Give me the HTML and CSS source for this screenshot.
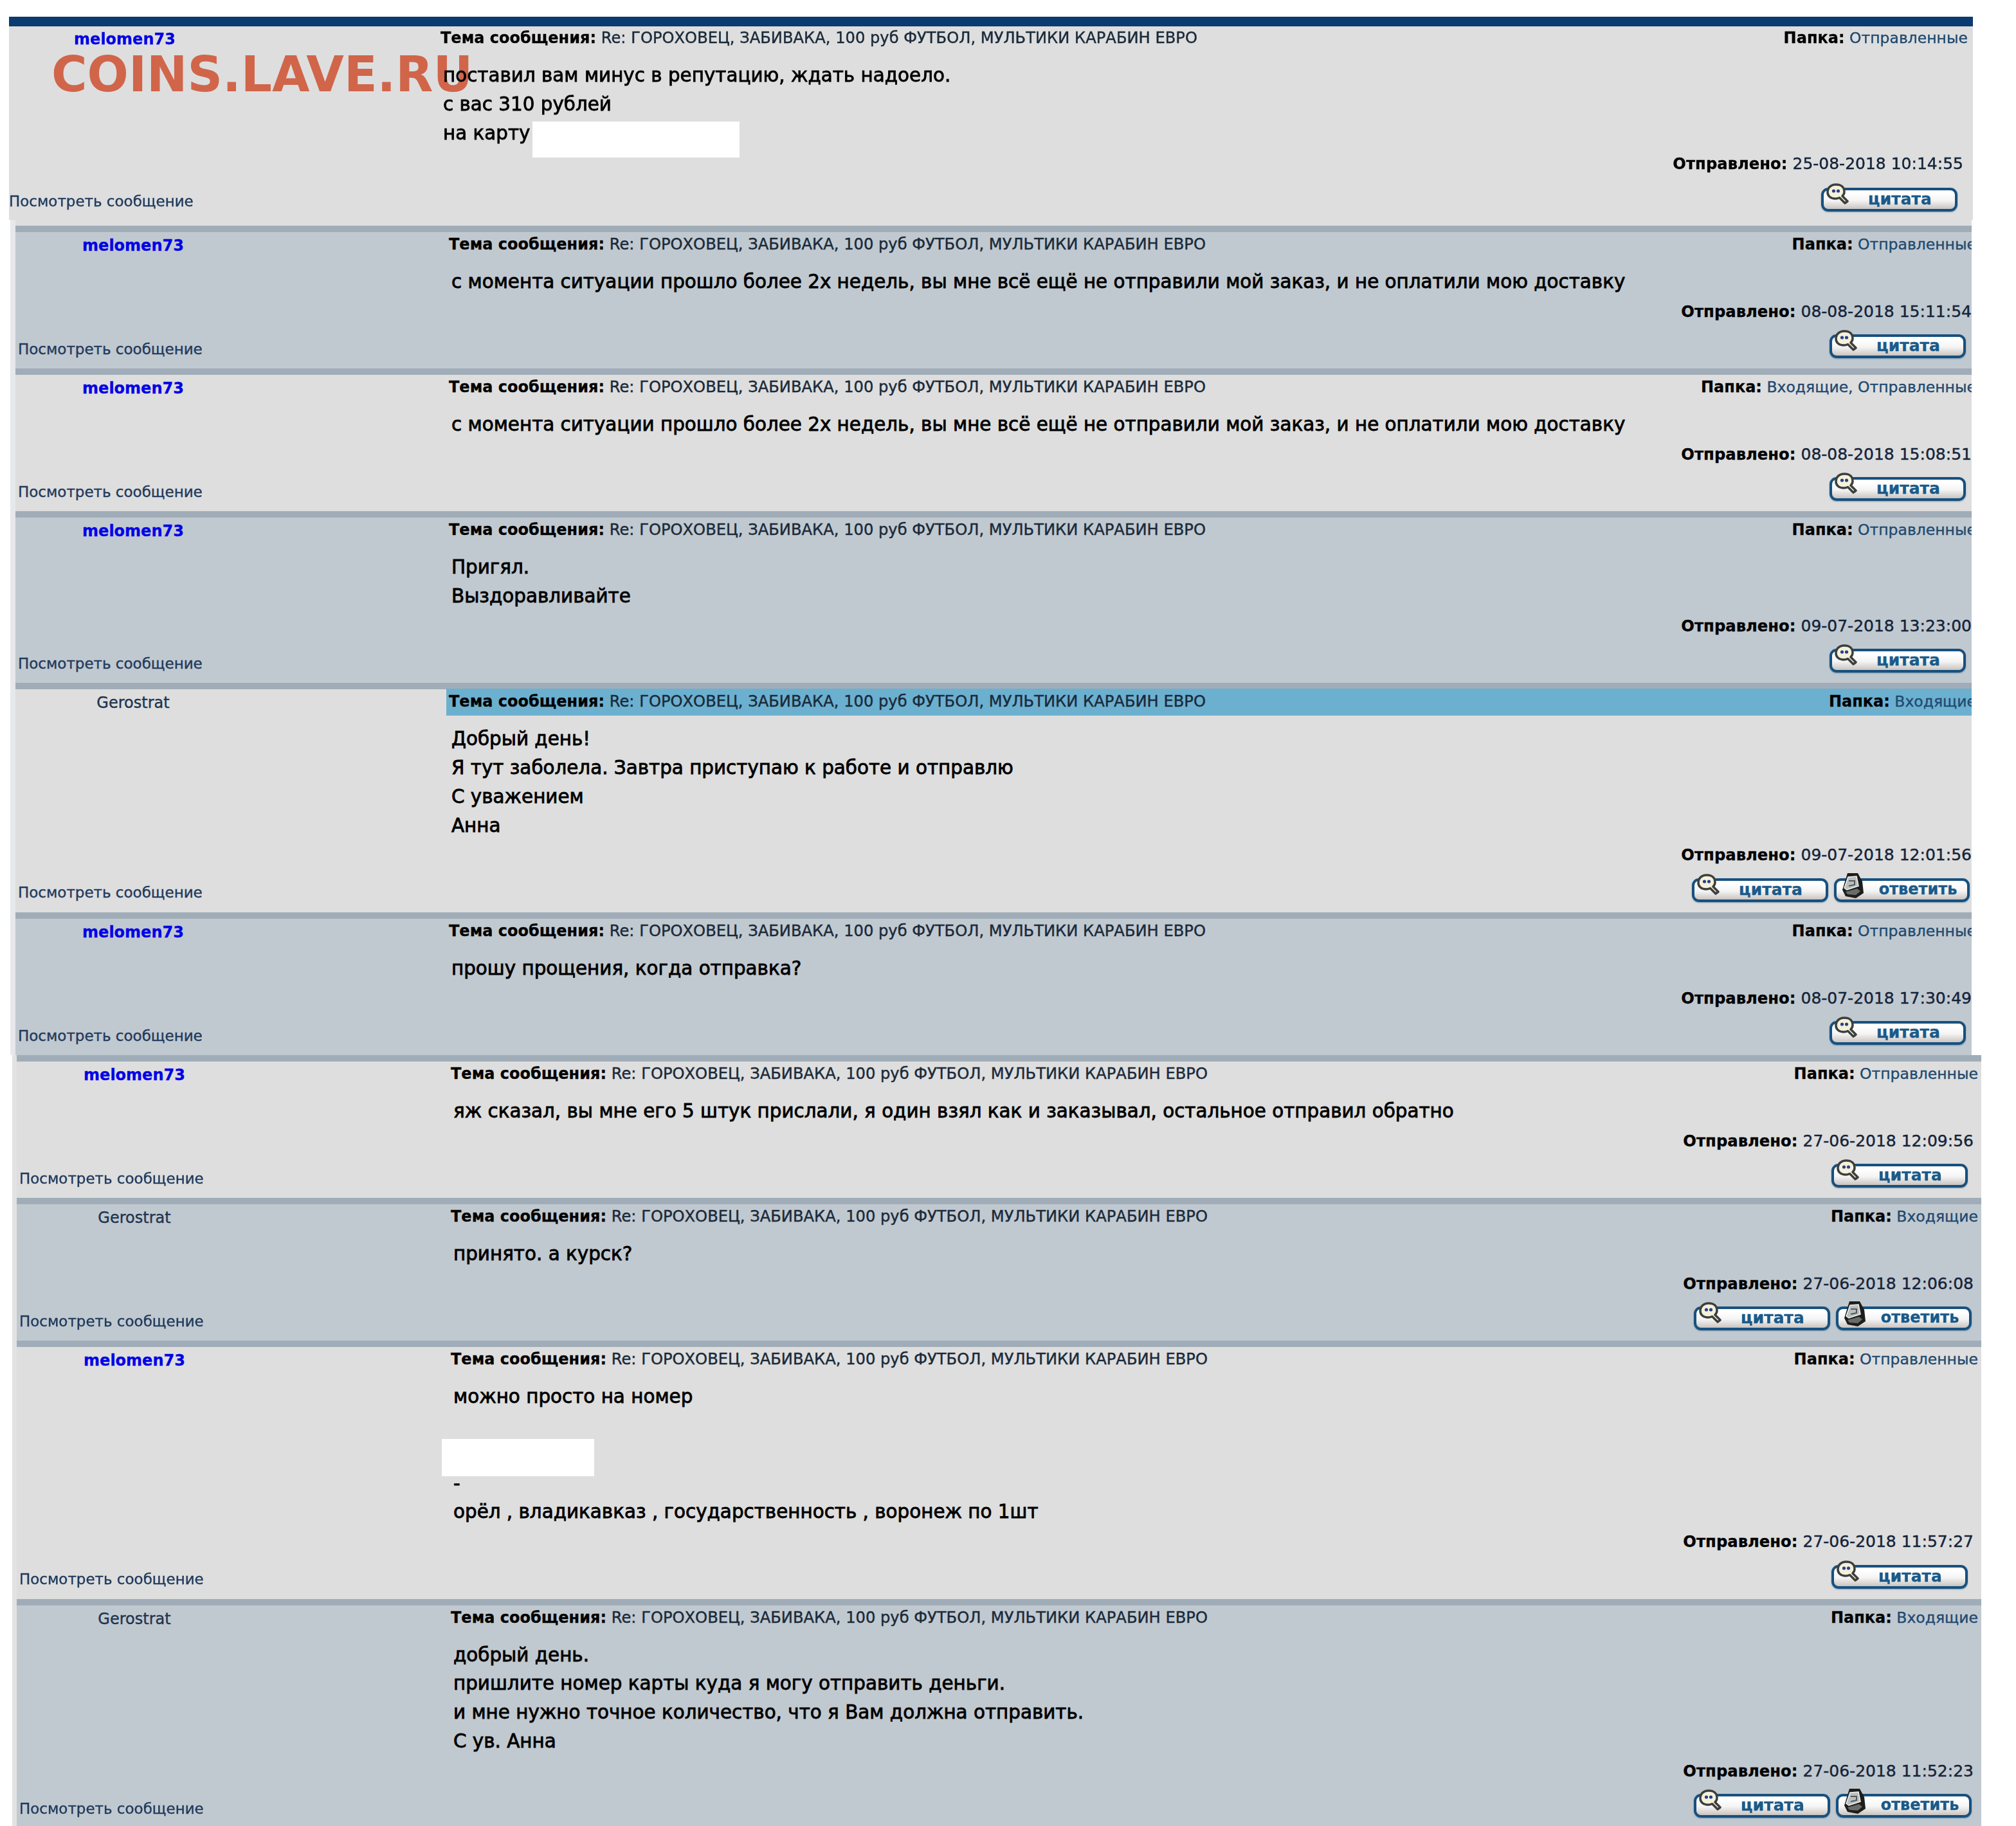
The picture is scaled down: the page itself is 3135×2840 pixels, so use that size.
FILE: index.html
```html
<!DOCTYPE html>
<html lang="ru">
<head>
<meta charset="utf-8">
<title>Личные сообщения</title>
<link rel="stylesheet" href="styles.css">
</head>
<body>
<svg class="defs" width="0" height="0" aria-hidden="true">
  <symbol id="i-quote" viewBox="0 0 35 34">
    <path d="M15 2C7 2 2 7 2 14c0 6 5 10 12 10 2.500 0 4.500-.5 6.500-1.500l8.500 8.500 4-3-8-8c2-2 3-4 3-6.500C28 6 23 2 15 2Z" fill="#f4f1dc" stroke="#3d3f3c" stroke-width="3.500" stroke-linejoin="round"/>
    <circle cx="11.500" cy="12" r="2.600" fill="#2b3f86"/><circle cx="18.500" cy="12" r="2.600" fill="#2b3f86"/>
  </symbol>
  <symbol id="i-reply" viewBox="0 0 38 43">
    <path d="M11 2 27 2 34 15 36 33 24 41 8 38 3 28Z" fill="#1d1d1b"/>
    <path d="M12 8 25 7 28 22 10 28 6 25Z" fill="#b9bfc0" stroke="#f2f2ee" stroke-width="1.500"/>
    <path d="M13 14h9v6l-9 2" fill="none" stroke="#55595a" stroke-width="2"/>
    <path d="M8 31 26 26 31 30 24 36 11 35Z" fill="#6a6c6a"/>
  </symbol>
</svg>
<main class="page">
  <section class="group group-a">
    <div class="topbar"></div>
    <div class="watermark">COINS.LAVE.RU</div>
    <article class="row grey no-stripe">
      <div class="main">
        <div class="author author-first"><a class="name">melomen73</a></div>
        <div class="content">
          <div class="subject"><span><b>Тема сообщения:</b> Re: ГОРОХОВЕЦ, ЗАБИВАКА, 100 руб ФУТБОЛ, МУЛЬТИКИ КАРАБИН ЕВРО</span><span class="folder"><b>Папка:</b> <a>Отправленные</a></span></div>
          <div class="text">
            <div class="line">поставил вам минус в репутацию, ждать надоело.</div>
            <div class="line">с вас 310 рублей</div>
            <div class="line hold">на карту<span class="redact redact-card"></span></div>
          </div>
          <div class="sent"><b>Отправлено:</b> 25-08-2018 10:14:55</div>
        </div>
      </div>
      <div class="foot"><a class="view">Посмотреть сообщение</a><div class="actions"><a class="btn btn-quote"><svg class="ico ico-quote"><use href="#i-quote"/></svg>цитата</a></div></div>
    </article>
  </section>

  <section class="group group-b">
    <div class="gap"></div>
    <article class="row blue">
      <div class="main">
        <div class="author"><a class="name">melomen73</a></div>
        <div class="content">
          <div class="subject"><span><b>Тема сообщения:</b> Re: ГОРОХОВЕЦ, ЗАБИВАКА, 100 руб ФУТБОЛ, МУЛЬТИКИ КАРАБИН ЕВРО</span><span class="folder"><b>Папка:</b> <a>Отправленные</a></span></div>
          <div class="text"><div class="line">с момента ситуации прошло более 2х недель, вы мне всё ещё не отправили мой заказ, и не оплатили мою доставку</div></div>
          <div class="sent"><b>Отправлено:</b> 08-08-2018 15:11:54</div>
        </div>
      </div>
      <div class="foot"><a class="view">Посмотреть сообщение</a><div class="actions"><a class="btn btn-quote"><svg class="ico ico-quote"><use href="#i-quote"/></svg>цитата</a></div></div>
    </article>
    <article class="row grey">
      <div class="main">
        <div class="author"><a class="name">melomen73</a></div>
        <div class="content">
          <div class="subject"><span><b>Тема сообщения:</b> Re: ГОРОХОВЕЦ, ЗАБИВАКА, 100 руб ФУТБОЛ, МУЛЬТИКИ КАРАБИН ЕВРО</span><span class="folder"><b>Папка:</b> <a>Входящие, Отправленные</a></span></div>
          <div class="text"><div class="line">с момента ситуации прошло более 2х недель, вы мне всё ещё не отправили мой заказ, и не оплатили мою доставку</div></div>
          <div class="sent"><b>Отправлено:</b> 08-08-2018 15:08:51</div>
        </div>
      </div>
      <div class="foot"><a class="view">Посмотреть сообщение</a><div class="actions"><a class="btn btn-quote"><svg class="ico ico-quote"><use href="#i-quote"/></svg>цитата</a></div></div>
    </article>
    <article class="row blue">
      <div class="main">
        <div class="author"><a class="name">melomen73</a></div>
        <div class="content">
          <div class="subject"><span><b>Тема сообщения:</b> Re: ГОРОХОВЕЦ, ЗАБИВАКА, 100 руб ФУТБОЛ, МУЛЬТИКИ КАРАБИН ЕВРО</span><span class="folder"><b>Папка:</b> <a>Отправленные</a></span></div>
          <div class="text"><div class="line">Пригял.</div><div class="line">Выздоравливайте</div></div>
          <div class="sent"><b>Отправлено:</b> 09-07-2018 13:23:00</div>
        </div>
      </div>
      <div class="foot"><a class="view">Посмотреть сообщение</a><div class="actions"><a class="btn btn-quote"><svg class="ico ico-quote"><use href="#i-quote"/></svg>цитата</a></div></div>
    </article>
    <article class="row grey">
      <div class="main">
        <div class="author"><span class="user">Gerostrat</span></div>
        <div class="content">
          <div class="subject unread"><span><b>Тема сообщения:</b> Re: ГОРОХОВЕЦ, ЗАБИВАКА, 100 руб ФУТБОЛ, МУЛЬТИКИ КАРАБИН ЕВРО</span><span class="folder"><b>Папка:</b> <a>Входящие</a></span></div>
          <div class="text"><div class="line">Добрый день!</div><div class="line">Я тут заболела. Завтра приступаю к работе и отправлю</div><div class="line">С уважением</div><div class="line">Анна</div></div>
          <div class="sent"><b>Отправлено:</b> 09-07-2018 12:01:56</div>
        </div>
      </div>
      <div class="foot"><a class="view">Посмотреть сообщение</a><div class="actions actions-two"><a class="btn btn-quote"><svg class="ico ico-quote"><use href="#i-quote"/></svg>цитата</a><a class="btn btn-reply"><svg class="ico ico-reply"><use href="#i-reply"/></svg>ответить</a></div></div>
    </article>
    <article class="row blue">
      <div class="main">
        <div class="author"><a class="name">melomen73</a></div>
        <div class="content">
          <div class="subject"><span><b>Тема сообщения:</b> Re: ГОРОХОВЕЦ, ЗАБИВАКА, 100 руб ФУТБОЛ, МУЛЬТИКИ КАРАБИН ЕВРО</span><span class="folder"><b>Папка:</b> <a>Отправленные</a></span></div>
          <div class="text"><div class="line">прошу прощения, когда отправка?</div></div>
          <div class="sent"><b>Отправлено:</b> 08-07-2018 17:30:49</div>
        </div>
      </div>
      <div class="foot"><a class="view">Посмотреть сообщение</a><div class="actions"><a class="btn btn-quote"><svg class="ico ico-quote"><use href="#i-quote"/></svg>цитата</a></div></div>
    </article>
  </section>

  <section class="group group-c">
    <article class="row grey">
      <div class="main">
        <div class="author"><a class="name">melomen73</a></div>
        <div class="content">
          <div class="subject"><span><b>Тема сообщения:</b> Re: ГОРОХОВЕЦ, ЗАБИВАКА, 100 руб ФУТБОЛ, МУЛЬТИКИ КАРАБИН ЕВРО</span><span class="folder"><b>Папка:</b> <a>Отправленные</a></span></div>
          <div class="text"><div class="line">яж сказал, вы мне его 5 штук прислали, я один взял как и заказывал, остальное отправил обратно</div></div>
          <div class="sent"><b>Отправлено:</b> 27-06-2018 12:09:56</div>
        </div>
      </div>
      <div class="foot"><a class="view">Посмотреть сообщение</a><div class="actions"><a class="btn btn-quote"><svg class="ico ico-quote"><use href="#i-quote"/></svg>цитата</a></div></div>
    </article>
    <article class="row blue">
      <div class="main">
        <div class="author"><span class="user">Gerostrat</span></div>
        <div class="content">
          <div class="subject"><span><b>Тема сообщения:</b> Re: ГОРОХОВЕЦ, ЗАБИВАКА, 100 руб ФУТБОЛ, МУЛЬТИКИ КАРАБИН ЕВРО</span><span class="folder"><b>Папка:</b> <a>Входящие</a></span></div>
          <div class="text"><div class="line">принято. а курск?</div></div>
          <div class="sent"><b>Отправлено:</b> 27-06-2018 12:06:08</div>
        </div>
      </div>
      <div class="foot"><a class="view">Посмотреть сообщение</a><div class="actions actions-two"><a class="btn btn-quote"><svg class="ico ico-quote"><use href="#i-quote"/></svg>цитата</a><a class="btn btn-reply"><svg class="ico ico-reply"><use href="#i-reply"/></svg>ответить</a></div></div>
    </article>
    <article class="row grey">
      <div class="main">
        <div class="author"><a class="name">melomen73</a></div>
        <div class="content">
          <div class="subject"><span><b>Тема сообщения:</b> Re: ГОРОХОВЕЦ, ЗАБИВАКА, 100 руб ФУТБОЛ, МУЛЬТИКИ КАРАБИН ЕВРО</span><span class="folder"><b>Папка:</b> <a>Отправленные</a></span></div>
          <div class="text">
            <div class="line">можно просто на номер</div>
            <div class="line"></div>
            <div class="line hold"><span class="redact redact-phone"></span></div>
            <div class="line">-</div>
            <div class="line">орёл , владикавказ , государственность , воронеж по 1шт</div>
          </div>
          <div class="sent"><b>Отправлено:</b> 27-06-2018 11:57:27</div>
        </div>
      </div>
      <div class="foot"><a class="view">Посмотреть сообщение</a><div class="actions"><a class="btn btn-quote"><svg class="ico ico-quote"><use href="#i-quote"/></svg>цитата</a></div></div>
    </article>
    <article class="row blue">
      <div class="main">
        <div class="author"><span class="user">Gerostrat</span></div>
        <div class="content">
          <div class="subject"><span><b>Тема сообщения:</b> Re: ГОРОХОВЕЦ, ЗАБИВАКА, 100 руб ФУТБОЛ, МУЛЬТИКИ КАРАБИН ЕВРО</span><span class="folder"><b>Папка:</b> <a>Входящие</a></span></div>
          <div class="text"><div class="line">добрый день.</div><div class="line">пришлите номер карты куда я могу отправить деньги.</div><div class="line">и мне нужно точное количество, что я Вам должна отправить.</div><div class="line">С ув. Анна</div></div>
          <div class="sent"><b>Отправлено:</b> 27-06-2018 11:52:23</div>
        </div>
      </div>
      <div class="foot"><a class="view">Посмотреть сообщение</a><div class="actions actions-two"><a class="btn btn-quote"><svg class="ico ico-quote"><use href="#i-quote"/></svg>цитата</a><a class="btn btn-reply"><svg class="ico ico-reply"><use href="#i-reply"/></svg>ответить</a></div></div>
    </article>
  </section>
</main>
</body>
</html>
```
FILE: styles.css
```css
html, body { margin: 0; height: 2840px; overflow: hidden; background: #fff; }
body { font-family: "DejaVu Sans", Verdana, sans-serif; color: #000; }
.defs { position: absolute; }
.page { padding-top: 26px; display: flex; flex-direction: column; filter: blur(0.7px); }

.group { position: relative; overflow: hidden; box-sizing: border-box; flex: none; }
.group-a { margin-left: 14px; width: 3054px; background: #dedede; --lead: 671px; --view: 0px; }
.group-b { margin-left: 16px; width: 3050px; border-left: 8px solid #e7e8ea; --lead: 674px; --view: 4px; }
.group-c { margin-left: 19px; width: 3062px; border-left: 7px solid #e2e2e2; --lead: 675px; --view: 4px; }

.topbar { height: 15px; background: #0b3b70; }
.gap { height: 9px; background: #dedede; }
.watermark { position: absolute; z-index: 1; left: 66px; top: 47px; font-size: 75.7px; line-height: 86px; font-weight: 700; color: #d0654a; white-space: nowrap; }

.row { box-sizing: border-box; border-top: 10px solid #a0adb8; padding-bottom: 16.4px; }
.row.no-stripe { position: relative; border-top: 0; padding-bottom: 13.4px; background: none; }
.grey { background: #dedede; }
.blue { background: #c1c9d0; }

.main { display: flex; padding-top: 1px; }
.no-stripe .main { position: relative; z-index: 2; padding-top: 0; }
.author { flex: none; width: 366px; margin-right: calc(var(--lead) - 366px); padding-top: 2px; text-align: center; font-size: 24px; line-height: 36px; }
.author-first { width: 360px; margin-right: calc(var(--lead) - 360px); }
.name { color: #0000e6; font-weight: 700; -webkit-text-stroke: 0.3px #0000e6; }
.user { color: #1f3550; -webkit-text-stroke: 0.4px #1f3550; }

.content { flex: none; width: 2375px; }
.subject { display: flex; justify-content: space-between; height: 36px; font-size: 24.2px; line-height: 36px; white-space: nowrap; color: #1a2a3a; -webkit-text-stroke: 0.45px #1a2a3a; }
.subject b { color: #000; font-size: 24px; -webkit-text-stroke: 0.3px #000; }
.folder { font-size: 23.5px; }
.folder a { color: #1f4a70; -webkit-text-stroke: 0.4px #1f4a70; }
.unread { background: #6cb0d0; margin: -2px 0 -4px -4px; padding: 2px 0 4px 4px; }

.text { margin: 18px 0 0 4px; font-size: 29.4px; -webkit-text-stroke: 0.85px #000; }
.line { height: 44.8px; line-height: 44.8px; white-space: nowrap; color: #000; }
.hold { position: relative; }
.redact { position: absolute; background: #fff; }
.redact-card { left: 139px; top: 4px; width: 322px; height: 56px; }
.redact-phone { left: -18px; top: -2px; width: 237px; height: 58px; }

.sent { margin: 6px 7px 0 0; height: 36px; line-height: 36px; font-size: 25px; text-align: right; color: #14243a; white-space: nowrap; -webkit-text-stroke: 0.45px #14243a; }
.sent b { color: #000; font-size: 24.3px; -webkit-text-stroke: 0.3px #000; }
.group-a .sent { margin-top: 8px; }
.group-a .foot { margin-top: 19px; }
.group-a .view { margin-top: 5px; }

.foot { display: flex; justify-content: space-between; align-items: center; width: calc(var(--lead) + 2375px); margin-top: 18px; height: 36px; position: relative; z-index: 2; }
.view { margin-left: var(--view); margin-top: 8px; font-size: 23px; line-height: 36px; color: #1f3a5c; white-space: nowrap; -webkit-text-stroke: 0.4px #1f3a5c; }
.actions { display: flex; gap: 9px; padding-right: 16px; }
.actions-two { padding-right: 10px; }

.btn { position: relative; box-sizing: border-box; height: 37px; border: 4px solid #17507e; border-radius: 11px; background: linear-gradient(#ffffff 15%, #f4f4f4 55%, #c9c4c0); color: #1a5a8a; font-weight: 700; font-size: 25px; line-height: 27px; text-align: center; -webkit-text-stroke: 0.4px #1a5a8a; box-shadow: 0 1px 2px rgba(23, 80, 126, 0.5); }
.btn-quote { width: 212px; padding-left: 33px; }
.btn-reply { width: 211px; padding-left: 50px; font-size: 24px; }
.ico { position: absolute; }
.ico-quote { left: 4px; top: -11px; width: 35px; height: 34px; }
.ico-reply { left: 6px; top: -14px; width: 38px; height: 43px; }
```
